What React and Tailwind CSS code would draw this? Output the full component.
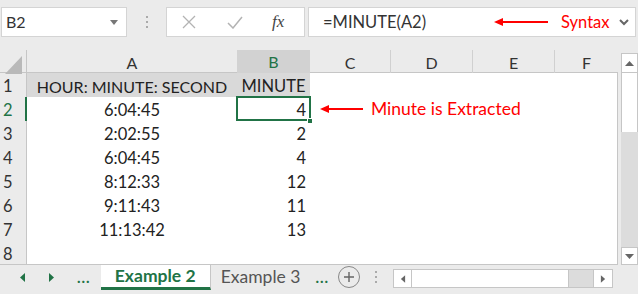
import React from 'react';

// --- sheet data ---
const ROWS = [
  { a: '6:04:45', b: 4 },
  { a: '2:02:55', b: 2 },
  { a: '6:04:45', b: 4 },
  { a: '8:12:33', b: 12 },
  { a: '9:11:43', b: 11 },
  { a: '11:13:42', b: 13 },
];

const COLS = 'grid grid-cols-[27px_210px_73px_81px_82px_82px_63px]';
const GREEN = 'text-[#217346]';

const RedArrow = ({ width }) => (
  <svg width={width} height="10" viewBox={`0 0 ${width} 10`}>
    <polygon points="0,5 9,1 9,9" fill="#ff0000" />
    <line x1="8" y1="5" x2={width} y2="5" stroke="#ff0000" strokeWidth="2" />
  </svg>
);

const Triangle = ({ dir = 'left', color = '#444', size = 7 }) => (
  <svg width={size} height={size + 2} viewBox="0 0 7 9">
    {dir === 'left' && <polygon points="6,0 6,9 1,4.5" fill={color} />}
    {dir === 'right' && <polygon points="1,0 1,9 6,4.5" fill={color} />}
  </svg>
);

const Toolbar = () => (
  <div className="h-[50px] flex items-start pt-[7px] shrink-0">
    <div className="ml-[1px] w-[126px] h-[30px] bg-white border border-[#d4d4d4] flex items-center justify-between pl-[4px] pr-[8px]">
      <span className="text-[16px] text-[#333]">B2</span>
      <svg width="8" height="5" viewBox="0 0 8 5"><polygon points="0,0 8,0 4,5" fill="#777" /></svg>
    </div>
    <div className="w-[39px] h-[30px] flex flex-col items-center justify-center gap-[3px]">
      <span className="w-[2px] h-[2px] bg-[#aaa]" />
      <span className="w-[2px] h-[2px] bg-[#aaa]" />
      <span className="w-[2px] h-[2px] bg-[#aaa]" />
    </div>
    <div className="w-[139px] h-[30px] bg-white border border-[#d4d4d4] flex items-center">
      <svg className="ml-[15px]" width="14" height="14" viewBox="0 0 14 14">
        <path d="M1 1 L13 13 M13 1 L1 13" stroke="#b3b3b3" strokeWidth="1.3" />
      </svg>
      <svg className="ml-[31px]" width="16" height="13" viewBox="0 0 16 13">
        <path d="M1 7 L6 12 L15 1" stroke="#b3b3b3" strokeWidth="1.5" fill="none" />
      </svg>
      <span className="ml-[29px] text-[17px] italic text-[#444] font-['Liberation_Serif',serif]">fx</span>
    </div>
    <div className="ml-[3px] w-[328px] h-[30px] bg-white border border-[#d4d4d4] flex items-center">
      <span className="ml-[14px] text-[16.5px] text-[#333]">=MINUTE(A2)</span>
      <div className="ml-[68px] flex items-center">
        <RedArrow width={54} />
      </div>
      <span className="ml-[13px] text-[16.5px] text-[#ff0000]">Syntax</span>
      <svg className="ml-[9px]" width="10" height="7" viewBox="0 0 10 7">
        <path d="M1 1 L5 5 L9 1" stroke="#666" strokeWidth="2" fill="none" />
      </svg>
    </div>
  </div>
);

const HeaderRow = () => (
  <div className={`${COLS} h-[23px] border-b border-[#c6c6c6] text-[16px] text-[#333]`}>
    <div className="relative border-r border-[#c6c6c6]">
      <svg className="absolute right-[4px] bottom-[2px]" width="17" height="18" viewBox="0 0 17 18">
        <polygon points="17,0 17,18 0,18" fill="#b9b9b9" />
      </svg>
    </div>
    <div className="flex items-center justify-center">A</div>
    <div className={`flex items-center justify-center bg-[#d2d2d2] border-b-2 border-[#217346] ${GREEN}`}>B</div>
    <div className="flex items-center justify-center border-r border-[#d0d0d0]">C</div>
    <div className="flex items-center justify-center border-r border-[#d0d0d0]">D</div>
    <div className="flex items-center justify-center border-r border-[#d0d0d0]">E</div>
    <div className="flex items-center justify-center">F</div>
  </div>
);

const RowHead = ({ n, active }) => (
  <div className={`h-[24px] leading-[27px] pl-[3px] text-[16.5px] bg-[#ebebeb] border-r ${active ? `border-r-2 border-[#217346] ${GREEN}` : 'border-[#c6c6c6] text-[#333]'}`}>
    {n}
  </div>
);

const Sheet = () => (
  <div className="w-[618px] flex flex-col">
    <HeaderRow />
    <div className="h-[192px] bg-white border-r border-b border-[#c6c6c6] text-[16.5px] text-[#222] overflow-hidden">
      {/* row 1: titles */}
      <div className={COLS}>
        <RowHead n={1} />
        <div className="h-[24px] leading-[27px] bg-[#d9d9d9] text-center whitespace-nowrap text-[16px]">HOUR: MINUTE: SECOND</div>
        <div className="h-[24px] leading-[27px] bg-[#d9d9d9] text-center">MINUTE</div>
        <div className="col-span-4" />
      </div>
      {ROWS.map((r, i) => (
        <div key={i} className={`${COLS} h-[24px]`}>
          <RowHead n={i + 2} active={i === 0} />
          <div className="h-[24px] leading-[27px] text-center">{r.a}</div>
          <div className="relative h-[24px] leading-[27px] text-right pr-[4px]">
            {r.b}
            {i === 0 && (
              <>
                <div className="absolute -left-[1px] -top-[1px] -right-[1px] bottom-[0px] border-2 border-[#217346]" />
                <div className="absolute -right-[3px] -bottom-[3px] w-[6px] h-[6px] bg-[#217346] border border-white" />
              </>
            )}
          </div>
          {i === 0 ? (
            <div className="col-span-4 h-[24px] flex items-center pl-[10px] leading-none">
              <RedArrow width={43} />
              <span className="ml-[8px] text-[17.5px] text-[#ff0000]">Minute is Extracted</span>
            </div>
          ) : (
            <div className="col-span-4" />
          )}
        </div>
      ))}
      <div className={COLS}>
        <RowHead n={8} />
      </div>
    </div>
  </div>
);

const VScroll = () => (
  <div className="w-[20px] pl-[3px] pt-[3px] flex flex-col">
    <div className="h-[20px] bg-white border border-[#c6c6c6] flex items-center justify-center">
      <svg width="9" height="5" viewBox="0 0 9 5"><polygon points="0,5 9,5 4.5,0" fill="#666" /></svg>
    </div>
    <div className="h-[59px] bg-white border-x border-[#c6c6c6]" />
    <div className="h-[115px] bg-[#dcdcdc]" />
    <div className="h-[18px] bg-white border border-[#c6c6c6] flex items-center justify-center">
      <svg width="9" height="5" viewBox="0 0 9 5"><polygon points="0,0 9,0 4.5,5" fill="#666" /></svg>
    </div>
  </div>
);

const TabBar = () => (
  <div className="h-[29px] flex items-start text-[15px]">
    <div className="h-[24px] flex items-center">
      <span className="ml-[19px]"><Triangle dir="left" color="#217346" /></span>
      <span className="ml-[22px]"><Triangle dir="right" color="#217346" /></span>
      <span className={`ml-[22px] font-bold ${GREEN} tracking-[1px]`}>...</span>
    </div>
    <div className={`ml-[10px] w-[110px] h-[25px] bg-white border-b-[3px] border-[#217346] border-r border-r-[#c6c6c6] flex items-center justify-center font-bold text-[17.5px] ${GREEN}`}>
      Example 2
    </div>
    <div className="h-[24px] flex items-center">
      <span className="ml-[10px] text-[17.5px] text-[#555]">Example 3</span>
      <span className={`ml-[15px] font-bold ${GREEN} tracking-[1px]`}>...</span>
      <div className="ml-[9px] w-[22px] h-[22px] rounded-full border border-[#888] flex items-center justify-center text-[#666]">
        <svg width="12" height="12" viewBox="0 0 12 12"><path d="M6 1 V11 M1 6 H11" stroke="#666" strokeWidth="1.4" /></svg>
      </div>
      <div className="ml-[15px] flex flex-col gap-[3px]">
        <span className="w-[2px] h-[2px] bg-[#aaa]" />
        <span className="w-[2px] h-[2px] bg-[#aaa]" />
        <span className="w-[2px] h-[2px] bg-[#aaa]" />
      </div>
    </div>
    <div className="ml-[16px] mt-[4px] w-[220px] h-[19px] flex border border-[#c6c6c6]">
      <div className="w-[18px] bg-white border-r border-[#c6c6c6] flex items-center justify-center">
        <Triangle dir="left" color="#666" size={6} />
      </div>
      <div className="w-[157px] bg-white border-r border-[#c6c6c6]" />
      <div className="flex-1 bg-[#dcdcdc]" />
      <div className="w-[19px] bg-white border-l border-[#c6c6c6] flex items-center justify-center">
        <Triangle dir="right" color="#666" size={6} />
      </div>
    </div>
  </div>
);

const App = () => (
  <div className="w-[638px] h-[294px] overflow-hidden bg-[#ebebeb] flex flex-col font-['Lato','Open_Sans',sans-serif]">
    <Toolbar />
    <div className="flex h-[215px] shrink-0">
      <Sheet />
      <VScroll />
    </div>
    <TabBar />
  </div>
);

export default App;
